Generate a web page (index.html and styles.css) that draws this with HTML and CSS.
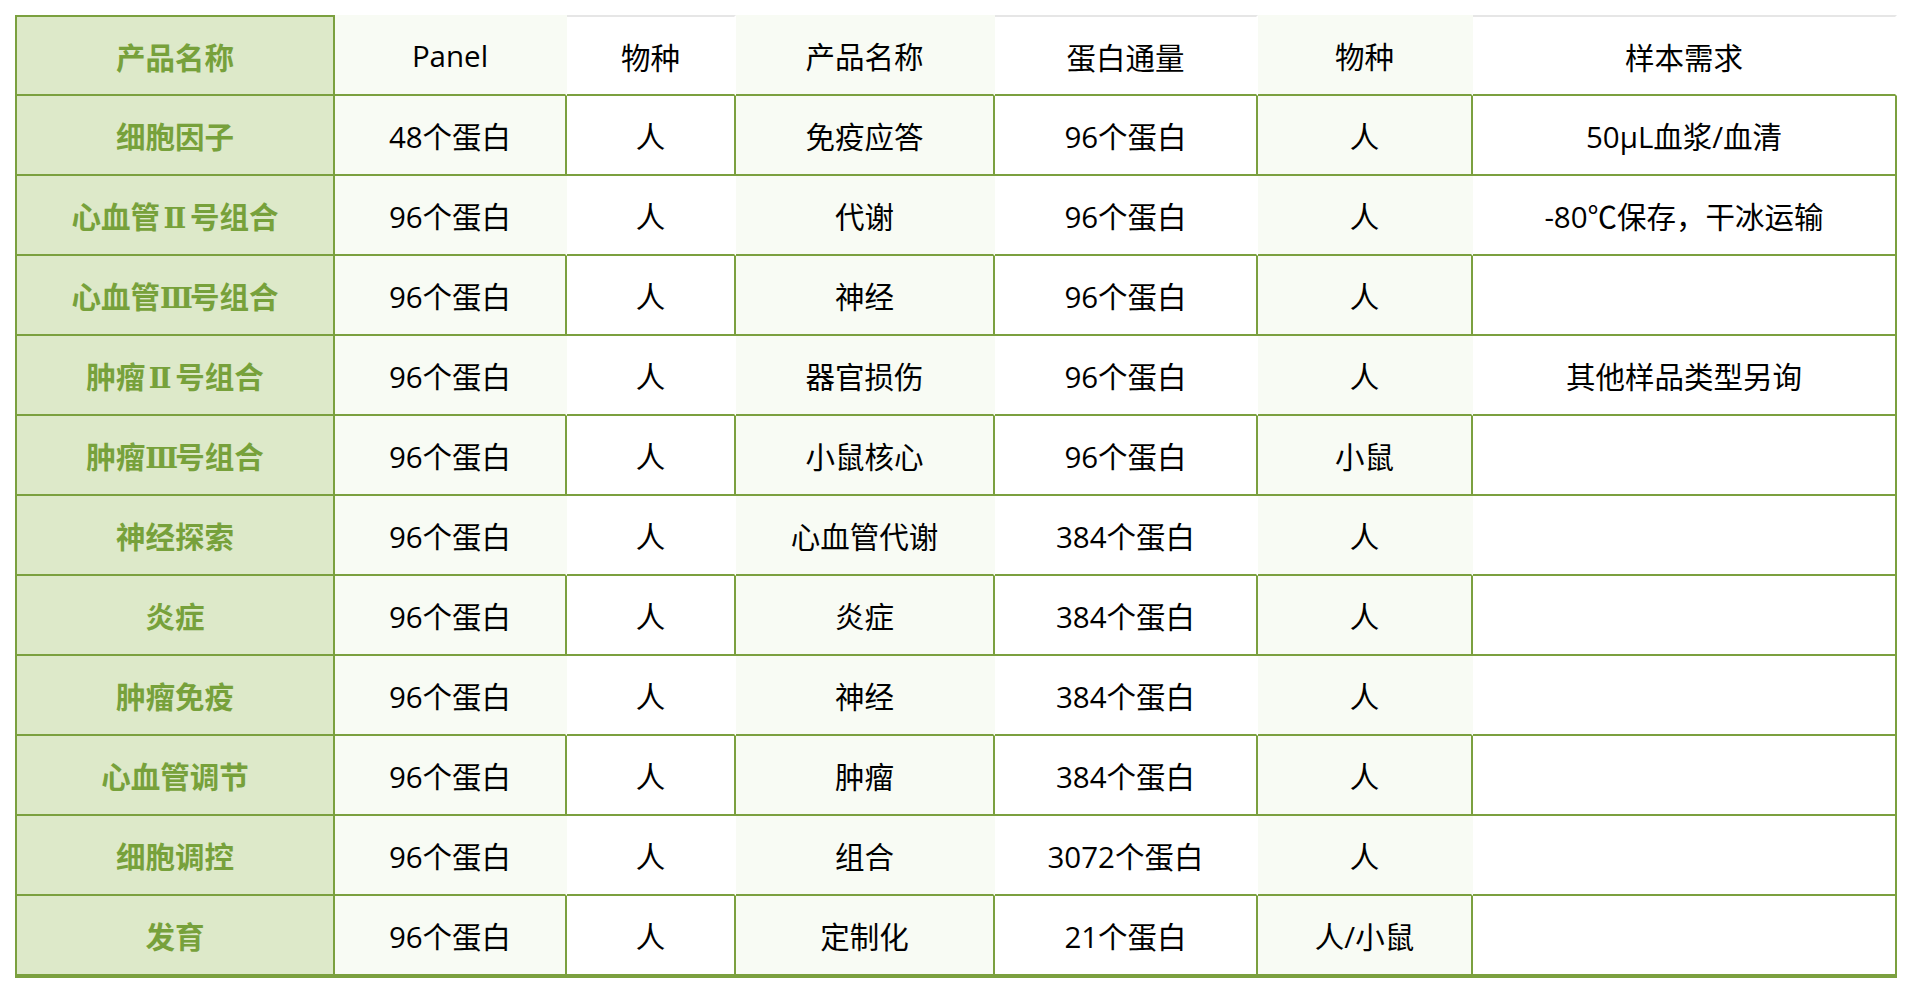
FILE: index.html
```html
<!DOCTYPE html>
<html lang="zh-CN">
<head>
<meta charset="utf-8">
<title>产品列表</title>
<link rel="stylesheet" href="styles.css">
</head>
<body>
<table class="panel-table">
  <colgroup>
    <col class="c1"><col class="c2"><col class="c3"><col class="c4"><col class="c5"><col class="c6"><col class="c7">
  </colgroup>
  <thead>
    <tr class="head">
      <th class="name">产品名称</th>
      <th class="tint">Panel</th>
      <th class="plain">物种</th>
      <th class="tint">产品名称</th>
      <th class="plain">蛋白通量</th>
      <th class="tint">物种</th>
      <th class="plain last">样本需求</th>
    </tr>
  </thead>
  <tbody>
    <tr class="ruled"><td class="name">细胞因子</td><td class="tint">48个蛋白</td><td>人</td><td class="tint">免疫应答</td><td>96个蛋白</td><td class="tint">人</td><td class="last">50μL血浆/血清</td></tr>
    <tr><td class="name">心血管<span class="numeral">Ⅱ</span>号组合</td><td class="tint">96个蛋白</td><td>人</td><td class="tint">代谢</td><td>96个蛋白</td><td class="tint">人</td><td class="last">-80℃保存，干冰运输</td></tr>
    <tr class="ruled"><td class="name">心血管<span class="numeral">Ⅲ</span>号组合</td><td class="tint">96个蛋白</td><td>人</td><td class="tint">神经</td><td>96个蛋白</td><td class="tint">人</td><td class="last"></td></tr>
    <tr><td class="name">肿瘤<span class="numeral">Ⅱ</span>号组合</td><td class="tint">96个蛋白</td><td>人</td><td class="tint">器官损伤</td><td>96个蛋白</td><td class="tint">人</td><td class="last">其他样品类型另询</td></tr>
    <tr class="ruled"><td class="name">肿瘤<span class="numeral">Ⅲ</span>号组合</td><td class="tint">96个蛋白</td><td>人</td><td class="tint">小鼠核心</td><td>96个蛋白</td><td class="tint">小鼠</td><td class="last"></td></tr>
    <tr><td class="name">神经探索</td><td class="tint">96个蛋白</td><td>人</td><td class="tint">心血管代谢</td><td>384个蛋白</td><td class="tint">人</td><td class="last"></td></tr>
    <tr class="ruled"><td class="name">炎症</td><td class="tint">96个蛋白</td><td>人</td><td class="tint">炎症</td><td>384个蛋白</td><td class="tint">人</td><td class="last"></td></tr>
    <tr><td class="name">肿瘤免疫</td><td class="tint">96个蛋白</td><td>人</td><td class="tint">神经</td><td>384个蛋白</td><td class="tint">人</td><td class="last"></td></tr>
    <tr class="ruled"><td class="name">心血管调节</td><td class="tint">96个蛋白</td><td>人</td><td class="tint">肿瘤</td><td>384个蛋白</td><td class="tint">人</td><td class="last"></td></tr>
    <tr><td class="name">细胞调控</td><td class="tint">96个蛋白</td><td>人</td><td class="tint">组合</td><td>3072个蛋白</td><td class="tint">人</td><td class="last"></td></tr>
    <tr class="ruled final"><td class="name">发育</td><td class="tint">96个蛋白</td><td>人</td><td class="tint">定制化</td><td>21个蛋白</td><td class="tint">人/小鼠</td><td class="last"></td></tr>
  </tbody>
</table>
</body>
</html>
```
FILE: styles.css
```css
html, body {
  margin: 0;
  padding: 0;
  background: #ffffff;
}

body {
  padding: 15px;
  font-family: "Open Sans", "Noto Sans CJK SC", sans-serif;
  color: #000000;
}

.panel-table {
  width: 1882px;
  table-layout: fixed;
  border-collapse: separate;
  border-spacing: 0;
  font-size: 29.5px;
}

.c1 { width: 320px; }
.c2 { width: 232px; }
.c3 { width: 169px; }
.c4 { width: 259px; }
.c5 { width: 263px; }
.c6 { width: 215px; }
.c7 { width: 424px; }

.panel-table th,
.panel-table td {
  padding: 0;
  text-align: center;
  vertical-align: middle;
  font-weight: 400;
  white-space: nowrap;
  border-right: 2px solid transparent;
  border-bottom: 2px solid #7ba03f;
  background-clip: border-box;
}

.panel-table tr {
  height: 80px;
}

.panel-table tr.head {
  height: 81px;
}

.panel-table tr.final {
  height: 82px;
}

.panel-table tr.final td {
  border-bottom-width: 4px;
}

/* header */
.head th {
  border-top: 2px solid transparent;
  font-family: "Noto Sans CJK SC", "Open Sans", sans-serif;
}

.head th.tint {
  font-family: "Open Sans", "Noto Sans CJK SC", sans-serif;
}

.head th.plain {
  border-top-color: #e6e6e6;
  background: #ffffff;
}

.head th.name {
  border-top-color: #7ba03f;
}

/* first column */
.panel-table .name {
  background: #dde9c9;
  color: #77a13b;
  font-weight: 700;
  font-family: "Noto Sans CJK SC", sans-serif;
  border-left: 2px solid #7ba03f;
  border-right: 2px solid #7ba03f;
}

.numeral {
  font-family: "DejaVu Serif", "Noto Sans CJK SC", serif;
  font-weight: 700;
  font-size: 27px;
  display: inline-block;
  width: 30px;
  text-align: center;
}

.panel-table .tint {
  background: #f8fbf4;
}

.panel-table td.last {
  border-right: 2px solid #7ba03f;
}

/* rows with full vertical rules */
.ruled td {
  border-right-color: #7ba03f;
}
```
